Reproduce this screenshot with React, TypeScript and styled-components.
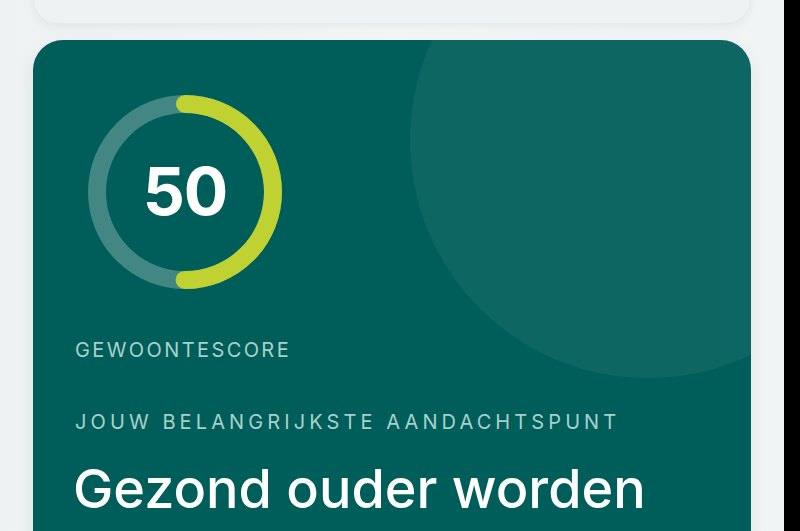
import * as React from 'react'
import styled, { createGlobalStyle } from 'styled-components'

const GlobalStyle = createGlobalStyle`
	html, body {
		margin: 0;
		padding: 0;
		height: 100%;
		overflow: hidden;
		background: #000;
		scrollbar-width: none;
	}
	html::-webkit-scrollbar,
	body::-webkit-scrollbar {
		display: none;
	}
	body {
		font-family: Inter, "Noto Sans", sans-serif;
	}
	* {
		box-sizing: border-box;
	}
`

const Screen = styled.div`
	display: flex;
	width: 800px;
	height: 531px;
	overflow: hidden;
	background: #000;
`

const Column = styled.div`
	flex: 0 0 784px;
	min-width: 0;
	display: flex;
	flex-direction: column;
	gap: 16px;
	padding: 0 33px;
	background: linear-gradient(90deg, #eef2f2 0%, #f5f7f7 50%, #f1f4f4 100%);
`

const ScrollEdge = styled.div`
	flex: 0 0 16px;
	background: #000;
`

const PrevCard = styled.div`
	flex-shrink: 0;
	height: 100px;
	margin-top: -76px;
	border-radius: 24px;
	background: #eef2f2;
	border: 1px solid #e3e8e8;
	box-shadow: 0 4px 10px rgba(0, 40, 40, 0.05);
`

const ScoreCard = styled.section`
	position: relative;
	flex-shrink: 0;
	overflow: hidden;
	padding: 42px 42px 0;
	height: 560px;
	border-radius: 30px;
	background: #005e5a;
	box-shadow: 0 6px 18px rgba(0, 40, 40, 0.08);
`

const Glow = styled.div`
	position: absolute;
	left: 377px;
	top: -138px;
	width: 476px;
	height: 476px;
	border-radius: 50%;
	background: rgba(255, 255, 255, 0.055);
`

const Content = styled.div`
	position: relative;
	display: flex;
	flex-direction: column;
`

const Ring = styled.div`
	position: relative;
	width: 220px;
	height: 220px;
`

const RingNumber = styled.div`
	position: absolute;
	inset: 0;
	display: flex;
	align-items: center;
	justify-content: center;
	padding-bottom: 2px;
	color: #fff;
	font-size: 66px;
	font-weight: 700;
	letter-spacing: -1px;
`

const Label = styled.div<{ $spacing: number }>`
	color: #a8d0cc;
	font-size: 20px;
	font-weight: 400;
	line-height: 30px;
	letter-spacing: ${props => props.$spacing}px;
	text-transform: uppercase;
	white-space: nowrap;
`

const ScoreLabel = styled(Label)`
	margin-top: 33px;
`

const FocusLabel = styled(Label)`
	margin-top: 42px;
`

const Heading = styled.h2`
	margin: 20px 0 0 -2px;
	color: #fff;
	font-size: 54px;
	font-weight: 500;
	line-height: 1.2;
	letter-spacing: 0;
	white-space: nowrap;
`

const ScoreRing = (props: { value: number }) => {
	const r = 88
	const c = 2 * Math.PI * r
	return (
		<Ring>
			<svg width="220" height="220" viewBox="0 0 220 220">
				<circle
					cx="110"
					cy="110"
					r={r}
					fill="none"
					stroke="rgba(255,255,255,0.26)"
					strokeWidth="18"
				/>
				<circle
					cx="110"
					cy="110"
					r={r}
					fill="none"
					stroke="#c0d232"
					strokeWidth="18"
					strokeLinecap="round"
					strokeDasharray={`${(c * props.value) / 100} ${c}`}
					transform="rotate(-90 110 110)"
				/>
			</svg>
			<RingNumber>{props.value}</RingNumber>
		</Ring>
	)
}

export default function App() {
	return (
		<Screen>
			<GlobalStyle />
			<Column>
				<PrevCard />
				<ScoreCard>
					<Glow />
					<Content>
						<ScoreRing value={50} />
						<ScoreLabel $spacing={2.4}>Gewoontescore</ScoreLabel>
						<FocusLabel $spacing={4.1}>Jouw belangrijkste aandachtspunt</FocusLabel>
						<Heading>Gezond ouder worden</Heading>
					</Content>
				</ScoreCard>
			</Column>
			<ScrollEdge />
		</Screen>
	)
}
